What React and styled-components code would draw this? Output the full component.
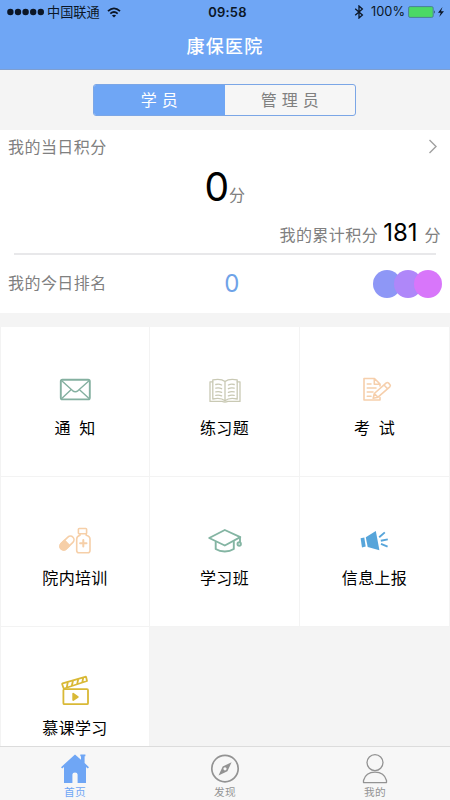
import React from "react";
import styled, { createGlobalStyle } from "styled-components";

const GlobalStyle = createGlobalStyle`
  * { box-sizing: border-box; }
  body {
    margin: 0;
    background: #f4f4f4;
    font-family: "Inter", "Noto Sans CJK SC", sans-serif;
  }
`;

const Screen = styled.div`
  width: 450px;
  height: 800px;
  display: flex;
  flex-direction: column;
  overflow: hidden;
  background: #f4f4f4;
`;

const Header = styled.header`
  height: 70px;
  flex: none;
  background: #6fa6f5;
  border-bottom: 1px solid #7f9fd0;
`;

const StatusBar = styled.div`
  height: 24px;
  display: grid;
  grid-template-columns: 1fr auto 1fr;
  align-items: center;
  padding: 0 5px 0 7px;
  color: #0b1626;
  font-size: 13px;
  line-height: 24px;
`;

const StatusGroup = styled.div`
  display: flex;
  align-items: center;
  justify-content: ${(p) => (p.$end ? "flex-end" : "flex-start")};
`;

const Carrier = styled.span`
  margin: 0 7px 0 2px;
  font-size: 13.2px;
`;

const Clock = styled.span`
  font-size: 13px;
  font-weight: 600;
  letter-spacing: 0.2px;
  padding-left: 3px;
`;

const Percent = styled.span`
  margin: 0 3px 0 7px;
  font-size: 12.8px;
`;

const Title = styled.h1`
  margin: 0;
  height: 44px;
  line-height: 45px;
  text-align: center;
  color: #fff;
  font-size: 18px;
  font-weight: 500;
  letter-spacing: 1.2px;
`;

const Segments = styled.div`
  flex: none;
  width: 263px;
  height: 32px;
  margin: 14px 94px 14px 93px;
  display: flex;
  border: 1px solid #7ba6e6;
  border-radius: 3px;
  overflow: hidden;
  background: #f6f6f6;
`;

const Segment = styled.button`
  flex: 1;
  padding: 0;
  border: 0;
  font: inherit;
  font-size: 16px;
  line-height: 30px;
  word-spacing: 0.6px;
  color: ${(p) => (p.$active ? "#fff" : "#808080")};
  background: ${(p) => (p.$active ? "#6fa6f5" : "transparent")};
`;

const Card = styled.section`
  flex: none;
  height: 183px;
  margin-bottom: 14px;
  background: #fff;
  color: #808080;
  font-size: 16px;
  letter-spacing: 0.45px;
`;

const CardHead = styled.div`
  height: 32px;
  display: flex;
  align-items: center;
  justify-content: space-between;
  padding: 0 12px 0 8px;
`;

const Today = styled.div`
  height: 52px;
  display: flex;
  justify-content: center;
  align-items: baseline;
  line-height: 50px;
`;

const BigNumber = styled.span`
  color: #000;
  font-size: 39px;
  letter-spacing: 0;
`;

const Total = styled.div`
  height: 41px;
  margin: 0 14px;
  border-bottom: 2px solid #e8e8ea;
  display: flex;
  justify-content: flex-end;
  align-items: baseline;
  line-height: 38px;
`;

const TotalInner = styled.span`
  margin-right: -5px;
  white-space: nowrap;
`;

const TotalNumber = styled.span`
  margin: 0 7px 0 5px;
  color: #000;
  font-size: 24px;
  letter-spacing: 0;
`;

const Rank = styled.div`
  height: 57px;
  display: grid;
  grid-template-columns: 1fr auto 1fr;
  align-items: center;
  padding: 0 8px;
`;

const RankLabel = styled.span`
  line-height: 24px;
  padding-bottom: 1px;
`;

const RankNumber = styled.span`
  color: #6fa3e8;
  font-size: 24px;
  padding-left: 14px;
`;

const Dots = styled.div`
  display: flex;
  flex-direction: row-reverse;
`;

const Dot = styled.i`
  width: 28px;
  height: 28px;
  border-radius: 50%;
  background: ${(p) => p.$color};

  & + & { margin-right: -7.5px; }
`;

const Grid = styled.main`
  flex: 1;
  min-height: 0;
  overflow: hidden;
  display: grid;
  grid-template-columns: repeat(3, 150px);
  grid-auto-rows: 150px;
`;

const Tile = styled.div`
  display: flex;
  flex-direction: column;
  align-items: center;
  padding-top: 45px;
  background: #fff;
  border: solid #f3f3f3;
  border-width: 0 1px 1px 0;

  &:nth-child(3n + 1) { border-left-width: 1px; }
`;

const TileIcon = styled.svg`
  width: 40px;
  height: 40px;
  flex: none;
  fill: none;
  stroke: ${(p) => p.$color};
  color: ${(p) => p.$color};
  stroke-width: ${(p) => p.$weight || 1.6};
  stroke-linejoin: round;
  stroke-linecap: round;
`;

const TileLabel = styled.span`
  margin-top: 4px;
  color: #000;
  font-size: 16px;
  line-height: 24px;
  letter-spacing: 0.35px;
  word-spacing: -0.6px;
  white-space: pre;
`;

const TabBar = styled.nav`
  flex: none;
  height: 54px;
  display: grid;
  grid-template-columns: repeat(3, 1fr);
  background: #f7f7f7;
  border-top: 1px solid #dcdcdc;
`;

const Tab = styled.div`
  display: flex;
  flex-direction: column;
  align-items: center;
  padding-top: 6px;
  color: ${(p) => (p.$active ? "#6fa6f5" : "#939393")};
  font-size: 10.7px;
  line-height: 16px;
  letter-spacing: 0.2px;
`;

const TabIcon = styled.svg`
  width: 30px;
  height: 32px;
  flex: none;
`;

const SignalDots = () => (
  <svg width="38" height="8" viewBox="0 0 38 8" fill="currentColor">
    {[3.4, 11, 18.6, 26.2, 33.8].map((x) => (
      <circle key={x} cx={x} cy="4" r="3.2" />
    ))}
  </svg>
);

const Wifi = () => (
  <svg width="14" height="11" viewBox="0 0 14 11" fill="none" stroke="currentColor" strokeWidth="1.8">
    <path d="M1 4.2Q7-1.4 13 4.2" />
    <path d="M3.3 6.7Q7 3.3 10.7 6.7" />
    <path d="M7 10.6L4.9 8.4Q7 6.9 9.1 8.4Z" fill="currentColor" stroke="none" />
  </svg>
);

const Bluetooth = () => (
  <svg width="10" height="14" viewBox="0 0 10 14" fill="none" stroke="currentColor" strokeWidth="1.3">
    <path d="M1.2 3.8L8.4 10L5 13V1L8.4 4L1.2 10.2" />
  </svg>
);

const Battery = () => (
  <svg width="37" height="12" viewBox="0 0 37 12">
    <rect x=".6" y=".6" width="24.6" height="10.8" rx="1.5" fill="#4bd964" stroke="#4a7f9a" />
    <path d="M26 4.2Q27.4 6 26 7.8Z" fill="#14263c" />
    <path d="M34.5 1L30 6.8h2.7L31.2 11L36 5.2H33Z" fill="#0b1626" />
  </svg>
);

const Chevron = () => (
  <svg width="10" height="16" viewBox="0 0 10 16" fill="none" stroke="#a0a0a0" strokeWidth="1.4">
    <path d="M1.5 2L8 8.5L1.5 15" />
  </svg>
);

const tiles = [
  {
    label: "通  知",
    color: "#84b0a0",
    weight: 1.9,
    art: (
      <>
        <rect x="5.8" y="7.8" width="29" height="19.6" rx="1.6" />
        <path d="M7 9L17.5 18.6Q20.3 21 23.1 18.6L33.8 9M7 26.3L16 17.8M33.8 26.3L24.5 17.8" strokeWidth="1.4" />
      </>
    ),
  },
  {
    label: "练习题",
    color: "#c9c9b4",
    weight: 1.3,
    art: (
      <>
        <path d="M20 9.5C17 7 12 7 7.8 7.8V27C12 26 17 26.2 20 28.7C23 26.2 28 26 32.2 27V7.8C28 7 23 7 20 9.5V28.7" />
        <path d="M7.8 9.8H5V29.4H17.2Q20 30.6 22.8 29.4H35V9.8H32.2" />
        <path d="M10.8 12.5Q14 11.7 16.6 13M10.8 16.2Q14 15.4 16.6 16.7M10.8 19.9Q14 19.1 16.6 20.4M10.8 23.4Q14 22.7 16.6 23.9M23.4 13Q26 11.7 29.2 12.5M23.4 16.7Q26 15.4 29.2 16.2M23.4 20.4Q26 19.1 29.2 19.9M23.4 23.9Q26 22.7 29.2 23.4" />
      </>
    ),
  },
  {
    label: "考  试",
    color: "#f6cfac",
    weight: 1.6,
    art: (
      <>
        <path d="M25 14V12L19.5 6.5H9V28H25V25.5M19.3 6.8V12.2H24.8" />
        <path d="M12.3 12H16M12.3 16H21M12.3 20H18M12.3 24.3H16" />
        <path d="M19.3 21.5L31.3 10.8Q32.5 10 33.6 11.1L35 12.7Q35.8 13.8 34.8 14.8L23 25.2L18.2 26.3ZM19.3 21.5L23 25.2M29 13L32.5 16.8" />
      </>
    ),
  },
  {
    label: "院内培训",
    color: "#f6cfa8",
    weight: 1.6,
    art: (
      <>
        <rect x="23.4" y="6.5" width="8.2" height="5.2" rx=".8" />
        <path d="M25 11.8V13.2Q21.7 14.2 21.7 17V28.5Q21.7 30.8 24 30.8H32.7Q35 30.8 35 28.5V17Q35 14.2 31.2 13.2V11.8" />
        <path d="M28.3 18V24.4M25.1 21.2H31.5" strokeWidth="2" />
        <g transform="rotate(-44 12 21)">
          <rect x="3.7" y="17.4" width="16.6" height="7.2" rx="3.6" />
          <path d="M12 17.4H7.3A3.6 3.6 0 0 0 7.3 24.6H12Z" fill="currentColor" />
        </g>
      </>
    ),
  },
  {
    label: "学习班",
    color: "#84b5a3",
    weight: 1.9,
    art: (
      <>
        <path d="M4.2 16L19.8 8L35.3 15.2L19.8 23.5Z" />
        <path d="M10.7 20V27Q14.5 29.5 19.8 29.5Q25 29.5 28.8 27V19.6" />
        <path d="M35 15.5V20.3" />
        <circle cx="34.2" cy="22" r="1.7" />
      </>
    ),
  },
  {
    label: "信息上报",
    color: "#57a5da",
    weight: 1.9,
    art: (
      <>
        <path d="M5.6 16.2L9.3 15.4L10.7 24.5L7 25.4Z" fill="currentColor" stroke="none" />
        <path d="M10.8 15.2L20.8 9L24.4 28.2L12.7 24.9Z" fill="currentColor" stroke="none" />
        <path d="M24.2 15.2L29.8 10.4M25.8 18.8L32.8 17.4M26 21.8L32.6 24.6" strokeLinecap="butt" />
      </>
    ),
  },
  {
    label: "慕课学习",
    color: "#d9b936",
    weight: 1.8,
    art: (
      <>
        <rect x="8.4" y="17.2" width="24.6" height="15" rx="1" />
        <path d="M7.6 11.4L30.2 4.8Q31 4.6 31.2 5.4L32 9L9.2 16.5Q8.6 16.6 8.4 15.8L7.2 12.2Q7 11.6 7.6 11.4ZM12.8 10.3L11.8 15.2M18 8.8L16.8 13.7M23.2 7.3L22.2 12M28.2 5.8L27.3 10.3" />
        <path d="M18.2 21.7L22.8 24.9L18.2 28.1Z" fill="currentColor" />
      </>
    ),
  },
];

const HomeIcon = () => (
  <TabIcon viewBox="0 0 30 32" fill="currentColor">
    <path d="M15 1.4L1 14.2L2.2 15.4L4 14V30H12.4V21.5Q12.4 19.4 15 19.4Q17.6 19.4 17.6 21.5V30H26V14L27.8 15.4L29 14.2L24.6 10V3.2H25.4V1.6H20.3V3.2H21V6.8Z" />
  </TabIcon>
);

const CompassIcon = () => (
  <TabIcon viewBox="0 0 30 32" fill="none" stroke="currentColor">
    <circle cx="15" cy="15.6" r="13.2" strokeWidth="1.7" />
    <path d="M21.6 9.2L17.4 18.2L8.5 22.4L12.7 13.4Z" fill="currentColor" stroke="none" />
    <circle cx="15" cy="15.8" r="1.6" fill="#f7f7f7" stroke="none" />
  </TabIcon>
);

const PersonIcon = () => (
  <TabIcon viewBox="0 0 30 32" fill="none" stroke="currentColor" strokeWidth="1.3">
    <circle cx="15" cy="9.6" r="8" />
    <path d="M3.5 29.6V27.5C5 22 9.5 19.2 15 19.2S25 22 26.5 27.5V29.6Z" strokeLinejoin="round" />
  </TabIcon>
);

export default function App() {
  return (
    <Screen>
      <GlobalStyle />
      <Header>
        <StatusBar>
          <StatusGroup>
            <SignalDots />
            <Carrier>中国联通</Carrier>
            <Wifi />
          </StatusGroup>
          <Clock>09:58</Clock>
          <StatusGroup $end>
            <Bluetooth />
            <Percent>100%</Percent>
            <Battery />
          </StatusGroup>
        </StatusBar>
        <Title>康保医院</Title>
      </Header>

      <Segments>
        <Segment $active>学 员</Segment>
        <Segment>管 理 员</Segment>
      </Segments>

      <Card>
        <CardHead>
          <span>我的当日积分</span>
          <Chevron />
        </CardHead>
        <Today>
          <BigNumber>0</BigNumber>
          <span>分</span>
        </Today>
        <Total>
          <TotalInner>
            我的累计积分<TotalNumber>181</TotalNumber>分
          </TotalInner>
        </Total>
        <Rank>
          <RankLabel>我的今日排名</RankLabel>
          <RankNumber>0</RankNumber>
          <Dots>
            <Dot $color="#d876fa" />
            <Dot $color="#af87f9" />
            <Dot $color="#8e97f6" />
          </Dots>
        </Rank>
      </Card>

      <Grid>
        {tiles.map((t) => (
          <Tile key={t.label}>
            <TileIcon viewBox="0 0 40 40" $color={t.color} $weight={t.weight}>
              {t.art}
            </TileIcon>
            <TileLabel>{t.label}</TileLabel>
          </Tile>
        ))}
      </Grid>

      <TabBar>
        <Tab $active>
          <HomeIcon />
          首页
        </Tab>
        <Tab>
          <CompassIcon />
          发现
        </Tab>
        <Tab>
          <PersonIcon />
          我的
        </Tab>
      </TabBar>
    </Screen>
  );
}
